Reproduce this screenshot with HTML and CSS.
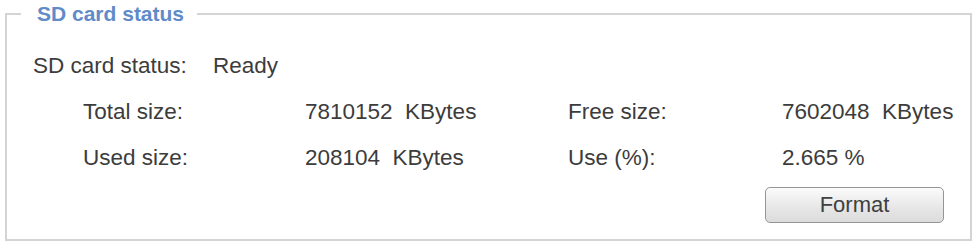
FILE: index.html
```html
<!DOCTYPE html>
<html>
<head>
<meta charset="utf-8">
<link rel="stylesheet" href="styles.css">
</head>
<body>
<fieldset class="panel">
  <legend class="panel-title">SD card status</legend>
  <div class="status-row">
    <span class="status-label">SD card status:</span>
    <span class="status-value">Ready</span>
  </div>
  <div class="size-grid">
    <span>Total size:</span>
    <span>7810152&nbsp;&nbsp;KBytes</span>
    <span>Free size:</span>
    <span>7602048&nbsp;&nbsp;KBytes</span>
    <span>Used size:</span>
    <span>208104&nbsp;&nbsp;KBytes</span>
    <span>Use (%):</span>
    <span>2.665 %</span>
  </div>
  <div class="actions">
    <button class="btn" type="button">Format</button>
  </div>
</fieldset>
</body>
</html>
```

FILE: styles.css
```css
html, body {
  margin: 0;
  padding: 0;
  background: #ffffff;
}

body {
  font-family: "Liberation Sans", Arial, sans-serif;
  color: #3c3c3c;
}

.panel {
  box-sizing: border-box;
  margin: 0 4px 0 5px;
  height: 241px;
  border: 2px solid #d4d4d4;
  padding: 23px 26px 0 26px;
  min-width: 0;
}

.panel-title {
  margin-left: -12px;
  padding: 0 13px 0 16px;
  font-size: 21px;
  font-weight: bold;
  line-height: 28px;
  color: #5f8bc8;
}

.status-row {
  display: flex;
  font-size: 22.5px;
  line-height: 30px;
  height: 30px;
}

.status-label {
  width: 180px;
}

.size-grid {
  display: grid;
  grid-template-columns: 222px 263px 214px 1fr;
  grid-auto-rows: 30px;
  row-gap: 16px;
  margin: 16px 0 0 50px;
  font-size: 22.5px;
  line-height: 30px;
  white-space: nowrap;
}

.actions {
  display: flex;
  justify-content: flex-end;
  margin-top: 14px;
}

.btn {
  box-sizing: border-box;
  width: 179px;
  height: 36px;
  border: 1px solid #959595;
  border-radius: 5px;
  background: linear-gradient(#fbfbfb, #e6e6e6 60%, #dcdcdc);
  font-family: "Liberation Sans", Arial, sans-serif;
  font-size: 22px;
  color: #404040;
  padding: 0;
}
```
